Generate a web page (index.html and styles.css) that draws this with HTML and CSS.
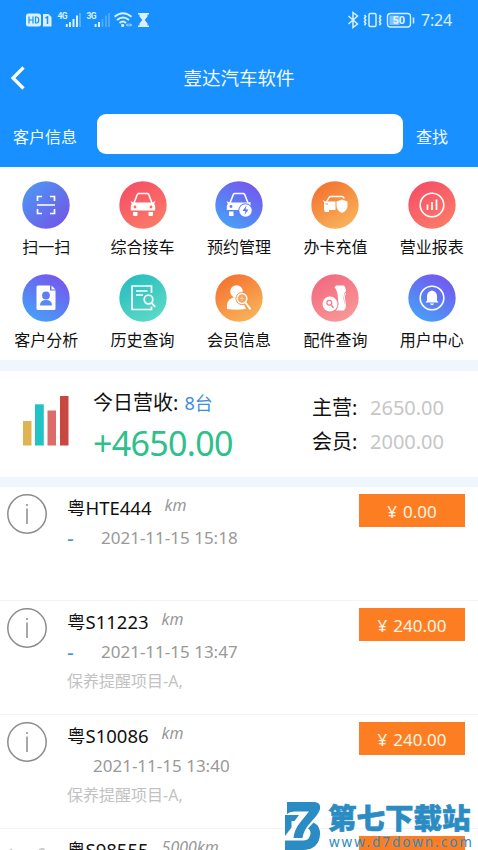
FILE: index.html
```html
<!DOCTYPE html>
<html lang="zh-CN">
<head>
<meta charset="utf-8">
<title>壹达汽车软件</title>
<link rel="stylesheet" href="styles.css">
</head>
<body>
<svg class="defs" width="0" height="0" aria-hidden="true">
  <defs>
    <linearGradient id="g-violet-down" x1="0" y1="0" x2="1" y2="1"><stop offset="0" stop-color="#4a9df5"/><stop offset="1" stop-color="#7650e4"/></linearGradient>
    <linearGradient id="g-violet-up" x1="0.2" y1="1" x2="0.8" y2="0"><stop offset="0" stop-color="#45a3f8"/><stop offset="1" stop-color="#7654ee"/></linearGradient>
    <linearGradient id="g-red" x1="0.2" y1="0" x2="0.8" y2="1"><stop offset="0" stop-color="#f64d66"/><stop offset="1" stop-color="#fb7d68"/></linearGradient>
    <linearGradient id="g-orange" x1="0.2" y1="0" x2="0.8" y2="1"><stop offset="0" stop-color="#f4702e"/><stop offset="1" stop-color="#f9b65c"/></linearGradient>
    <linearGradient id="g-teal" x1="0.2" y1="0" x2="0.8" y2="1"><stop offset="0" stop-color="#27bcbf"/><stop offset="1" stop-color="#5edbc6"/></linearGradient>
    <linearGradient id="g-pink" x1="0.2" y1="0" x2="0.8" y2="1"><stop offset="0" stop-color="#f2687f"/><stop offset="1" stop-color="#f99a98"/></linearGradient>
  </defs>
</svg>
<header class="header">
  <div class="status">
    <svg class="status-left" width="126" height="20" viewBox="25 10 126 20">
      <rect x="26" y="13.5" width="15" height="13" rx="2.5" fill="#d8f0ff"/>
      <path d="M29 16.500v7M33 16.500v7M29 20h4M35.500 17v6h1q2.200 0 2.200-3t-2.200-3z" fill="none" stroke="#1890ff" stroke-width="1.200"/>
      <path d="M43 14h5.500l3 3v9.500h-8.500z" fill="#d8f0ff"/>
      <path d="M45.500 18l2-1v7" fill="none" stroke="#1890ff" stroke-width="1.500"/>
      <text class="net" x="57.500" y="18.500">4G</text>
      <path d="M66.800 27v-3M70 27v-5M73.500 27v-8M77 27V15.500" stroke="#d8f0ff" stroke-width="2"/>
      <path d="M80 27V13" stroke="#69b7ff" stroke-width="1.500"/>
      <text class="net" x="86.500" y="18.500">3G</text>
      <path d="M95.600 27v-3M99 27v-5" stroke="#d8f0ff" stroke-width="2"/>
      <path d="M102.500 27v-8M106 27V15.500M109 27V13" stroke="#58aefc" stroke-width="1.600"/>
      <path d="M114.500 16.800Q123 9.500 131.500 16.800M117 20Q123 15 129 20M119.500 23Q123 20 126 23" fill="none" stroke="#d8f0ff" stroke-width="1.900"/>
      <circle cx="122.700" cy="25.400" r="1.600" fill="#d8f0ff"/>
      <path d="M126.500 25h5M128 23.500l-1.500 1.500 1.500 1.500M130 23.500l1.500 1.500-1.500 1.500" stroke="#b6deff" stroke-width="1" fill="none"/>
      <path d="M138 13.700h11M138 26.300h11" stroke="#d8f0ff" stroke-width="1.500"/>
      <path d="M139.500 14h8v2.500L144.800 20l2.700 3.500V26h-8v-2.500l2.700-3.500-2.700-3.500z" fill="#d8f0ff"/>
    </svg>
    <div class="status-right">
      <svg width="70" height="20" viewBox="346 10 70 20">
        <path d="M348.500 16l9 8-4.500 3.500v-15l4.500 3.500-9 8" fill="none" stroke="#d8f0ff" stroke-width="1.500"/>
        <rect x="369" y="13.500" width="7" height="13" rx="1.200" fill="none" stroke="#d8f0ff" stroke-width="1.500"/>
        <path d="M364.500 15l1.200 1.500-1.200 1.800 1.200 1.700-1.200 1.800 1.200 1.700-1.200 1.800M379.500 15l1.200 1.500-1.200 1.800 1.200 1.700-1.200 1.800 1.200 1.700-1.200 1.800" fill="none" stroke="#d8f0ff" stroke-width="1.600"/>
        <rect x="387.500" y="13.500" width="23" height="13.500" rx="3" fill="none" stroke="#d8f0ff" stroke-width="1.400"/>
        <rect x="389.500" y="15.500" width="10" height="9.500" fill="#7ec2ff"/>
        <path d="M413.500 17.500v6" stroke="#d8f0ff" stroke-width="1.500"/>
        <text class="battery" x="392.500" y="24.300">50</text>
      </svg>
      <span class="clock">7:24</span>
    </div>
  </div>
  <div class="titlebar">
    <svg class="back" width="16" height="24" viewBox="0 0 16 24"><path d="M13.500 1.500L3 12l10.500 10.500" fill="none" stroke="#fff" stroke-width="3.200"/></svg>
    <h1 class="title">壹达汽车软件</h1>
  </div>
  <div class="search">
    <span class="search-label">客户信息</span>
    <div class="search-input"></div>
    <span class="search-go">查找</span>
  </div>
</header>

<nav class="menu">
  <div class="item">
    <svg viewBox="0 0 48 48"><circle cx="24" cy="24" r="23.700" fill="url(#g-violet-down)"/><path d="M15.500 20v-4.500H20M28 15.500h4.500V20M15.500 28v4.500H20M28 32.500h4.500V28M15 24h18" fill="none" stroke="#fff" stroke-width="1.700"/></svg>
    <span>扫一扫</span>
  </div>
  <div class="item">
    <svg viewBox="0 0 48 48"><circle cx="24" cy="24" r="23.700" fill="url(#g-red)"/><path d="M15 22l3.300-8.500q.5-1 1.500-1h8.400q1 0 1.500 1L33 22" fill="none" stroke="#fff" stroke-width="1.600"/><path d="M11.500 20l3 1.500h19l3-1.500-1.300 3q1 1 1 2.500v4H11.800v-4q0-1.500 1-2.500z" fill="#fff"/><path d="M14 31h4.500v3q0 1-1 1H15q-1 0-1-1zM29.500 31H34v3q0 1-1 1h-2.500q-1 0-1-1z" fill="#fff"/><circle cx="16" cy="26" r="1.400" fill="#fa6d6b"/><circle cx="32" cy="26" r="1.400" fill="#fa6d6b"/></svg>
    <span>综合接车</span>
  </div>
  <div class="item">
    <svg viewBox="0 0 48 48"><circle cx="24" cy="24" r="23.700" fill="url(#g-violet-up)"/><path d="M15 22l3.300-8.500q.5-1 1.500-1h8.400q1 0 1.500 1L33 22" fill="none" stroke="#fff" stroke-width="1.600"/><path d="M11.500 20l3 1.500h18l3-.5v8H11.800v-3.500q0-1.500 1-2.500zM14 30.500h4.500V35H14z" fill="#fff"/><circle cx="16" cy="25.500" r="1.400" fill="#5d80f5"/><circle cx="30.500" cy="29.500" r="7.200" fill="#5d80f5"/><circle cx="30.500" cy="29.500" r="6.200" fill="#fff"/><path d="M31.500 24.500l-4 5.500h3l-1 4 4-5.500h-3z" fill="#5d70f0"/></svg>
    <span>预约管理</span>
  </div>
  <div class="item">
    <svg viewBox="0 0 48 48"><circle cx="24" cy="24" r="23.700" fill="url(#g-orange)"/><path d="M15.500 21l2.500-4.500q.5-1 2-1h11q1.500 0 2.200 2" fill="none" stroke="#fff" stroke-width="1.500"/><path d="M11.500 19l3 1.500h10V29H13v-8zM13.500 29h4.500v2h-4.500z" fill="#fff"/><path d="M31 18.500l5.500 2v4.500q0 4.500-5.500 7-5.500-2.500-5.500-7v-4.500z" fill="#fff"/><path d="M14.500 23h2.500" stroke="#f69243"/></svg>
    <span>办卡充值</span>
  </div>
  <div class="item">
    <svg viewBox="0 0 48 48"><circle cx="24" cy="24" r="23.700" fill="url(#g-red)"/><circle cx="24" cy="24" r="11.800" fill="none" stroke="#fff" stroke-width="1.600"/><path d="M19.500 29v-5.500M24 29v-8M28.500 29V18.500" stroke="#fff" stroke-width="1.700"/></svg>
    <span>营业报表</span>
  </div>
  <div class="item">
    <svg viewBox="0 0 48 48"><circle cx="24" cy="24" r="23.700" fill="url(#g-violet-up)"/><path d="M16 11.500h12v5h5.500v18q0 1.500-1.500 1.500H16q-1.500 0-1.500-1.500V13q0-1.500 1.500-1.500zM29.500 11.500l4 4h-4z" fill="#fff"/><circle cx="24" cy="21.500" r="3.900" fill="#607df2"/><path d="M18 31.500q0-5.500 6-5.500t6 5.500z" fill="#5889f4"/></svg>
    <span>客户分析</span>
  </div>
  <div class="item">
    <svg viewBox="0 0 48 48"><circle cx="24" cy="24" r="23.700" fill="url(#g-teal)"/><path d="M32.500 19v-7H13v23.500h19.500V32.500M17 17h11.500M17 21h7" fill="none" stroke="#fff" stroke-width="1.700"/><circle cx="29.500" cy="25.500" r="4.300" fill="none" stroke="#fff" stroke-width="1.700"/><path d="M32.500 28.800l3.800 4" stroke="#fff" stroke-width="1.800"/></svg>
    <span>历史查询</span>
  </div>
  <div class="item">
    <svg viewBox="0 0 48 48"><circle cx="24" cy="24" r="23.700" fill="url(#g-orange)"/><circle cx="21.500" cy="17.500" r="6.300" fill="#fff"/><path d="M12 35q-1-9 6-11.500h8L31 35q-10 1.500-19 0z" fill="#fff"/><circle cx="27" cy="24.500" r="6.500" fill="#f68c40"/><circle cx="27" cy="24.500" r="4.900" fill="#f9a45e" stroke="#fff" stroke-width="1.500"/><path d="M30.500 28.500l5 7" stroke="#fff" stroke-width="2"/><path d="M25 24.500h4M27 22.500v4" stroke="#fcd3a8" stroke-width="1"/></svg>
    <span>会员信息</span>
  </div>
  <div class="item">
    <svg viewBox="0 0 48 48"><circle cx="24" cy="24" r="23.700" fill="url(#g-pink)"/><path d="M25.500 11.500H33q2 2 2 6-2 0-2.500 6.500.500 6.500 2.500 6.500 0 4-2 6h-8q2.500-5 2-12.500T23.500 13z" fill="#fff"/><path d="M34.500 19q-1 2-1 5t1 5.500" fill="none" stroke="#fff" stroke-width="1"/><circle cx="19" cy="30" r="8.600" fill="#f5808a"/><circle cx="19" cy="30" r="7.500" fill="#fff"/><circle cx="18.300" cy="28.800" r="2.400" fill="none" stroke="#f5808a" stroke-width="1.300"/><path d="M20 30.800l2.500 3" stroke="#f5808a" stroke-width="1.500"/></svg>
    <span>配件查询</span>
  </div>
  <div class="item">
    <svg viewBox="0 0 48 48"><circle cx="24" cy="24" r="23.700" fill="url(#g-violet-up)"/><circle cx="24" cy="24" r="11.800" fill="none" stroke="#fff" stroke-width="1.600"/><path d="M24 16.500q5 1 5 6v4l1.500 2h-13l1.500-2v-4q0-5 5-6zM22 29.500h4l-1 1.500h-2z" fill="#fff"/></svg>
    <span>用户中心</span>
  </div>
</nav>

<section class="summary">
  <svg class="chart" width="46" height="50" viewBox="0 0 46 50"><path d="M0 25h8.500v24.500H0z" fill="#dfb352"/><path d="M12 8.300h8.800v41.200H12z" fill="#22c3c6"/><path d="M24.500 14.500H33v35h-8.500z" fill="#dc6c69"/><path d="M37 0h8.500v49.500H37z" fill="#c94740"/></svg>
  <div class="today">
    <div class="today-head"><span>今日营收:</span><span class="count">8台</span></div>
    <div class="today-sum">+4650.00</div>
  </div>
  <dl class="split">
    <dt>主营:</dt><dd>2650.00</dd>
    <dt>会员:</dt><dd>2000.00</dd>
  </dl>
</section>

<main class="orders">
  <article class="order">
    <svg class="info" viewBox="0 0 40 40"><circle cx="20" cy="20" r="19.200"/><path d="M20 14.500V30M20 10v2"/></svg>
    <div class="body">
      <div class="line1"><span class="plate">粤HTE444</span><span class="km">km</span></div>
      <div class="line2"><span class="dash">-</span><time>2021-11-15 15:18</time></div>
    </div>
    <div class="price"><span class="yen">¥</span>0.00</div>
  </article>
  <article class="order">
    <svg class="info" viewBox="0 0 40 40"><circle cx="20" cy="20" r="19.200"/><path d="M20 14.500V30M20 10v2"/></svg>
    <div class="body">
      <div class="line1"><span class="plate">粤S11223</span><span class="km">km</span></div>
      <div class="line2"><span class="dash">-</span><time>2021-11-15 13:47</time></div>
      <div class="note">保养提醒项目-A,</div>
    </div>
    <div class="price"><span class="yen">¥</span>240.00</div>
  </article>
  <article class="order">
    <svg class="info" viewBox="0 0 40 40"><circle cx="20" cy="20" r="19.200"/><path d="M20 14.500V30M20 10v2"/></svg>
    <div class="body">
      <div class="line1"><span class="plate">粤S10086</span><span class="km">km</span></div>
      <div class="line2 no-dash"><time>2021-11-15 13:40</time></div>
      <div class="note">保养提醒项目-A,</div>
    </div>
    <div class="price"><span class="yen">¥</span>240.00</div>
  </article>
  <article class="order last">
    <svg class="info faint" viewBox="0 0 40 40"><path d="M2 14l3-2M32 13l4-1.500M38 14l-2-2.500"/></svg>
    <div class="body">
      <div class="line1"><span class="plate">粤S98555</span><span class="km">5000km</span></div>
    </div>
    <div class="price"></div>
  </article>
</main>

<div class="watermark">
  <svg width="36" height="48" viewBox="0 0 36 48">
    <path d="M2 0H29Q36 0 35 7Q34 11 29.500 16L23 23.500Q18.500 29 17.500 36H8.500Q9.500 27 15.500 20L24 9.500H11Q5 9 2 12z" fill="#2b8cc4"/>
    <path d="M0 13H14L9.500 19H6.500V25.500L0 34zM28.500 20.500Q35.500 24 35 32.500 34 47 19 48H0V38.500H18.500Q25 38 25.500 31.500 25.500 27.500 23 26.500z" fill="#2b8cc4"/>
  </svg>
  <div class="mark-text">
    <span class="mark-name">第七下载站</span>
    <span class="mark-url">www.d7down.com</span>
  </div>
</div>
</body>
</html>
```
FILE: styles.css
```css
* { box-sizing: border-box; margin: 0; padding: 0; }
html, body { height: 850px; overflow: hidden; }
body {
  position: relative;
  width: 478px;
  background: #fff;
  color: #111;
  font-family: "Noto Sans", "Noto Sans CJK SC", sans-serif;
  font-size: 16px;
}
svg { display: block; flex: none; }
.defs { position: absolute; }

.header { height: 167px; background: #1890ff; color: #f2fbff; }
.status { display: flex; justify-content: space-between; align-items: center; height: 40px; padding: 0 26px 0 25px; }
.status-right { display: flex; align-items: center; gap: 5px; }
.clock { font-size: 16px; line-height: 20px; letter-spacing: -0.2px; color: #d8f0ff; }
.net { font: bold 8.5px Roboto, sans-serif; fill: #d8f0ff; letter-spacing: -0.6px; }
.battery { font: bold 11px Roboto, sans-serif; fill: #e4f5ff; }
.titlebar { display: grid; grid-template-columns: 40px 1fr 40px; align-items: center; height: 74px; padding-top: 2px; }
.back { margin-left: 10px; }
.title { text-align: center; font-size: 18.5px; font-weight: 400; line-height: 28px; }
.search { display: flex; align-items: center; height: 40px; padding: 0 13px; }
.search-label { width: 84px; line-height: 24px; padding-top: 5px; }
.search-input { width: 306px; height: 40px; border-radius: 9px; background: #fff; }
.search-go { margin-left: 13px; line-height: 24px; padding-top: 5px; }

.menu {
  display: grid;
  grid-template-columns: repeat(5, 1fr);
  grid-auto-rows: 93px;
  height: 193px;
  margin: 0 -2px;
  padding-top: 12.5px;
  border-top: 1px solid #e9f8ff;
}
.item { display: flex; flex-direction: column; align-items: center; }
.item svg { width: 48px; height: 48px; }
.item span { margin-top: 6px; line-height: 24px; }

.summary {
  display: flex;
  height: 127px;
  padding-left: 23px;
  border-top: 11px solid #eff6fe;
  border-bottom: 10px solid #eff6fe;
}
.chart { margin-top: 25px; }
.today { width: 219px; margin-left: 24px; padding-top: 17px; }
.today-head { display: flex; align-items: center; font-size: 20px; line-height: 30px; }
.count { margin-left: 6px; font-size: 18px; color: #3c8fd9; }
.today-sum { font-size: 34px; line-height: 44px; margin-top: 3px; letter-spacing: -0.7px; color: #2dc08a; }
.split { display: grid; grid-template-columns: 58px auto; grid-auto-rows: 33.5px; align-content: start; padding-top: 20px; font-size: 20px; line-height: 33px; }
.split dd { color: #c6c6c6; }

.order {
  display: grid;
  grid-template-columns: 61px 292px 106px;
  height: 114px;
  padding-left: 6px;
  border-bottom: 1px solid #f3f3f3;
}
.last { height: 21px; border-bottom: 0; overflow: hidden; }
.info { width: 40px; height: 40px; margin: 7px 0 0 0.5px; fill: none; stroke: #8c8c8c; stroke-width: 1.5; }
.faint { stroke: #c4c4c4; margin-top: 8px; }
.body { padding-top: 8px; white-space: nowrap; }
.line1 { display: flex; line-height: 26px; height: 30px; }
.plate { font-size: 18.5px; }
.km { margin: -3px 0 0 13px; font-size: 16px; font-style: italic; color: #989898; }
.line2 { display: flex; font-size: 17px; line-height: 26px; color: #999; }
.dash { width: 34px; font-size: 21px; color: #3f9bd8; }
.no-dash { padding-left: 26px; }
.note { margin-top: 3px; font-size: 16px; line-height: 26px; color: #c2c2c2; }
.price { height: 33px; margin-top: 7px; background: #fd7e22; color: #fff4e4; font-size: 17px; line-height: 36px; text-align: center; }
.yen { margin-right: 6px; }

.watermark { position: absolute; left: 285px; top: 802px; display: flex; gap: 7px; height: 48px; color: #2b8cc4; }
.mark-text { display: flex; flex-direction: column; white-space: nowrap; }
.mark-name { font-size: 28.5px; font-weight: 900; line-height: 33px; -webkit-text-stroke: 0.6px #2b8cc4; }
.mark-url { font-size: 13.5px; line-height: 15px; letter-spacing: 2px; padding-left: 1px; }
```
